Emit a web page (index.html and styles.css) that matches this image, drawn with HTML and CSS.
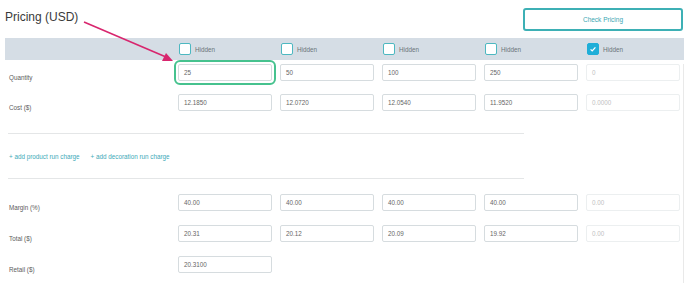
FILE: index.html
```
<!DOCTYPE html>
<html>
<head>
<meta charset="utf-8">
<link rel="stylesheet" href="styles.css">
</head>
<body>
<div class="page">
  <div class="top">
    <h1 class="title">Pricing (USD)</h1>
    <button class="check-btn">Check Pricing</button>
  </div>
  <div class="grid header">
    <div></div>
    <label class="hide"><span class="cb"></span>Hidden</label>
    <label class="hide"><span class="cb"></span>Hidden</label>
    <label class="hide"><span class="cb"></span>Hidden</label>
    <label class="hide"><span class="cb"></span>Hidden</label>
    <label class="hide"><span class="cb on"><svg viewBox="0 0 12 12" width="12" height="12"><path d="M3.6 6.4 L5.2 7.9 L8.4 4.4" fill="none" stroke="#fff" stroke-width="1.3"/></svg></span>Hidden</label>
  </div>
  <div class="body">
    <div class="grid row first">
      <div class="lbl">Quantity</div>
      <div class="inp focus">25</div>
      <div class="inp">50</div>
      <div class="inp">100</div>
      <div class="inp">250</div>
      <div class="inp off">0</div>
    </div>
    <div class="grid row">
      <div class="lbl">Cost ($)</div>
      <div class="inp">12.1850</div>
      <div class="inp">12.0720</div>
      <div class="inp">12.0540</div>
      <div class="inp">11.9520</div>
      <div class="inp off">0.0000</div>
    </div>
    <div class="divider d1"></div>
    <div class="links">
      <a class="lnk">+ add product run charge</a>
      <a class="lnk">+ add decoration run charge</a>
    </div>
    <div class="divider d2"></div>
    <div class="grid row m1">
      <div class="lbl">Margin (%)</div>
      <div class="inp">40.00</div>
      <div class="inp">40.00</div>
      <div class="inp">40.00</div>
      <div class="inp">40.00</div>
      <div class="inp off">0.00</div>
    </div>
    <div class="grid row r2">
      <div class="lbl">Total ($)</div>
      <div class="inp">20.31</div>
      <div class="inp">20.12</div>
      <div class="inp">20.09</div>
      <div class="inp">19.92</div>
      <div class="inp off">0.00</div>
    </div>
    <div class="grid row r3">
      <div class="lbl">Retail ($)</div>
      <div class="inp">20.3100</div>
    </div>
  </div>
  <svg class="arrow" width="688" height="80" viewBox="0 0 688 80">
    <line x1="84" y1="22" x2="166" y2="57" stroke="#d8266e" stroke-width="1.6"/>
    <polygon points="173,61 162,61 166,53" fill="#d8266e"/>
  </svg>
</div>
</body>
</html>
```
FILE: styles.css
```
* { box-sizing: border-box; }
html, body { margin: 0; background: #fff; }
body {
  font-family: "Liberation Sans", Arial, sans-serif;
  color: #5c5c5c;
  font-size: 6.3px;
}
.page {
  position: relative;
  width: 688px;
  height: 283px;
  padding: 0 4px 0 5px;
  overflow: hidden;
}
.top {
  height: 38px;
  display: flex;
  justify-content: space-between;
  align-items: flex-start;
}
.title {
  margin: 0;
  padding-top: 10px;
  font-size: 12px;
  line-height: 15px;
  font-weight: normal;
  color: #3a3a3a;
}
.check-btn {
  margin: 8px 1px 0 0;
  width: 160px;
  height: 23px;
  border: 2px solid #3db0b5;
  border-radius: 3px;
  background: #fff;
  color: #3ba7b3;
  font-family: "Liberation Sans", Arial, sans-serif;
  font-size: 6.5px;
  padding: 0;
}
.grid {
  display: grid;
  grid-template-columns: 165px repeat(5, 94px);
  column-gap: 8px;
}
.header {
  height: 22px;
  background: #d5dde5;
  align-items: center;
}
.hide {
  display: flex;
  align-items: center;
  gap: 4px;
  padding-left: 1px;
  color: #6b737a;
  font-size: 6.3px;
}
.cb {
  width: 12px;
  height: 12px;
  border: 1.5px solid #4db8c1;
  border-radius: 2px;
  background: #fff;
  display: block;
}
.cb.on {
  background: #1faed8;
  border-color: #1faed8;
  position: relative;
}
.cb.on svg { position: absolute; left: -1.5px; top: -1.5px; }
.body {
  border-right: 1px solid #e9e9e9;
  height: 223px;
}
.row { height: 17px; margin-top: 13px; }
.row.first { margin-top: 4px; }
.row.m1 { margin-top: 15px; }
.row.r2 { margin-top: 14px; }
.row.r3 { margin-top: 14px; }
.lbl {
  align-self: end;
  line-height: 9px;
  padding-left: 4px;
  margin-bottom: -1px;
  color: #5c5c5c;
}
.inp {
  height: 17px;
  border: 1px solid #d6dcdf;
  border-radius: 2px;
  padding-left: 5px;
  line-height: 15px;
  color: #666;
  background: #fff;
}
.inp.off {
  border-color: #eceff0;
  color: #c2c2c2;
}
.inp.focus {
  outline: 2px solid #46c28e;
  outline-offset: 2px;
}
.divider {
  width: 516px;
  margin-left: 3px;
  height: 1px;
  background: #e4e6e7;
}
.d1 { margin-top: 22px; }
.links {
  display: flex;
  gap: 11px;
  padding-left: 4px;
  margin-top: 18px;
  height: 9px;
  line-height: 9px;
}
.lnk { color: #41aab8; font-size: 6.3px; }
.d2 { margin-top: 17px; }
.arrow {
  position: absolute;
  left: 0;
  top: 0;
  pointer-events: none;
}
```
